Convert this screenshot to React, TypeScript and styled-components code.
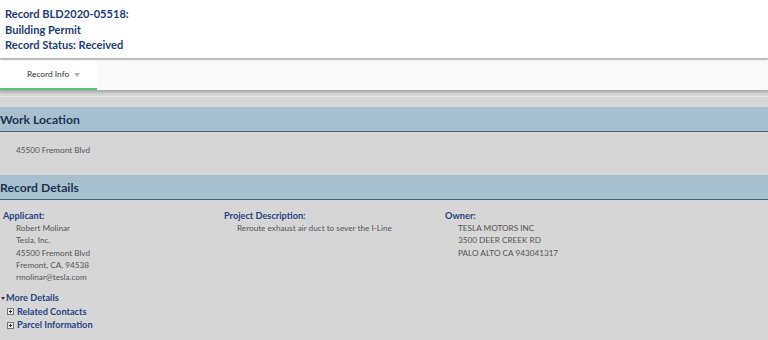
import styled, { createGlobalStyle } from "styled-components";

const GlobalStyle = createGlobalStyle`
  html, body {
    margin: 0;
    padding: 0;
    background: #d6d6d6;
    font-family: Lato, "Open Sans", sans-serif;
  }
`;

const Page = styled.div`
  width: 768px;
  height: 340px;
  overflow: hidden;
  background: #d6d6d6;
`;

const Header = styled.div`
  background: #ffffff;
  padding: 6px 5px 7px;
  height: 45px;
  box-shadow: 0 1px 3px rgba(0, 0, 0, 0.25);
  position: relative;
  z-index: 2;
`;

const HeaderLine = styled.div`
  font-size: 11.1px;
  font-weight: 700;
  color: #1d3c72;
  line-height: 15.5px;
`;

const TabBar = styled.div`
  margin-top: 2px;
  height: 30px;
  background: #fafafa;
  display: flex;
  box-shadow: 0 2px 2px rgba(0, 0, 0, 0.18);
  position: relative;
  z-index: 1;
`;

const Tab = styled.div`
  width: 97px;
  background: #ffffff;
  border-bottom: 2px solid #5cc17a;
  box-sizing: border-box;
  display: flex;
  align-items: center;
  padding-left: 27px;
  gap: 5px;
  font-size: 8.4px;
  color: #333;
`;

const Caret = styled.span`
  width: 0;
  height: 0;
  border-left: 3px solid transparent;
  border-right: 3px solid transparent;
  border-top: 4px solid #9fb6c8;
  margin-top: 1px;
`;

const Spacer = styled.div`
  height: 17px;
  border-top: 4px solid #cfcfcf;
  box-sizing: border-box;
  position: relative;
  &::after {
    content: "";
    position: absolute;
    left: 0;
    right: 0;
    top: 2px;
    height: 1px;
    background: #e4e4e4;
  }
`;

const SectionTitle = styled.div`
  background: #a8c0cd;
  border-bottom: 1.5px solid #3e6378;
  height: 24px;
  display: flex;
  align-items: center;
  font-size: 12.2px;
  font-weight: 700;
  color: #1b3452;
`;

const SectionBody = styled.div<{ $h: number }>`
  height: ${({ $h }) => $h}px;
  box-sizing: border-box;
`;

const Plain = styled.div<{ $indent?: number }>`
  font-size: 8.2px;
  color: #555;
  line-height: 12.3px;
  padding-left: ${({ $indent }) => $indent ?? 0}px;
`;

const Columns = styled.div`
  display: grid;
  grid-template-columns: 221px 221px 1fr;
  padding: 9px 0 0 3px;
`;

const Label = styled.div`
  font-size: 9.2px;
  font-weight: 700;
  color: #1f4384;
  line-height: 13px;
`;

const Links = styled.div`
  padding: 8px 0 0 1px;
`;

const LinkRow = styled.div<{ $indent?: number }>`
  display: flex;
  align-items: center;
  gap: 1px;
  padding-left: ${({ $indent }) => $indent ?? 0}px;
  font-size: 9.2px;
  font-weight: 700;
  color: #1f4384;
  line-height: 13.5px;
`;

const DownCaret = styled.span`
  width: 0;
  height: 0;
  border-left: 2.5px solid transparent;
  border-right: 2.5px solid transparent;
  border-top: 3.5px solid #333;
`;

const PlusBox = styled.span`
  width: 7px;
  height: 7px;
  box-sizing: border-box;
  border: 1px solid #777;
  background: #e8e8e8;
  position: relative;
  margin-right: 2px;
  &::before {
    content: "";
    position: absolute;
    left: 1px;
    top: 2px;
    width: 3px;
    height: 1px;
    background: #333;
  }
  &::after {
    content: "";
    position: absolute;
    left: 2px;
    top: 1px;
    width: 1px;
    height: 3px;
    background: #333;
  }
`;

const columns = [
  {
    label: "Applicant:",
    lines: [
      "Robert Molinar",
      "Tesla, Inc.",
      "45500 Fremont Blvd",
      "Fremont, CA, 94538",
      "rmolinar@tesla.com",
    ],
  },
  { label: "Project Description:", lines: ["Reroute exhaust air duct to sever the I-Line"] },
  {
    label: "Owner:",
    lines: ["TESLA MOTORS INC", "3500 DEER CREEK RD", "PALO ALTO CA 943041317"],
  },
];

export default function App() {
  return (
    <Page>
      <GlobalStyle />
      <Header>
        <HeaderLine>Record BLD2020-05518:</HeaderLine>
        <HeaderLine>Building Permit</HeaderLine>
        <HeaderLine>Record Status: Received</HeaderLine>
      </Header>
      <TabBar>
        <Tab>
          Record Info <Caret />
        </Tab>
      </TabBar>
      <Spacer />
      <SectionTitle>Work Location</SectionTitle>
      <SectionBody $h={43}>
        <Plain $indent={16} style={{ paddingTop: 12 }}>
          45500 Fremont Blvd
        </Plain>
      </SectionBody>
      <SectionTitle>Record Details</SectionTitle>
      <Columns>
        {columns.map((c) => (
          <div key={c.label}>
            <Label>{c.label}</Label>
            {c.lines.map((l) => (
              <Plain key={l} $indent={13}>
                {l}
              </Plain>
            ))}
          </div>
        ))}
      </Columns>
      <Links>
        <LinkRow>
          <DownCaret />
          More Details
        </LinkRow>
        <LinkRow $indent={6}>
          <PlusBox />
          Related Contacts
        </LinkRow>
        <LinkRow $indent={6}>
          <PlusBox />
          Parcel Information
        </LinkRow>
      </Links>
    </Page>
  );
}
